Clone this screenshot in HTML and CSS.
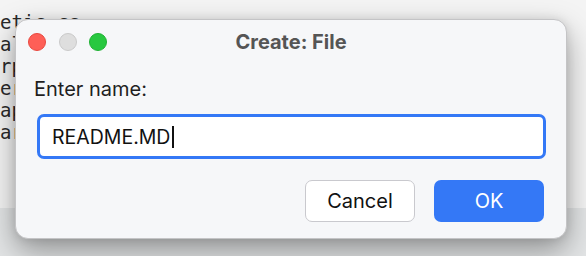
FILE: index.html
```html
<!DOCTYPE html>
<html lang="en">
<head>
    <meta charset="UTF-8">
    <meta name="viewport" content="width=device-width, initial-scale=1.0">
    <title>Create: File</title>
    <link rel="stylesheet" href="styles.css">
</head>
<body>
    <div class="editor">
        <div class="code">
            <span class="line">etic.cs</span>
            <span class="line">al</span>
            <span class="line">rp</span>
            <span class="line">er</span>
            <span class="line">ap</span>
            <span class="line">ar</span>
        </div>
        <div class="status-band"></div>
    </div>

    <div class="dialog">
        <div class="titlebar">
            <div class="lights">
                <span class="light close"></span>
                <span class="light mini"></span>
                <span class="light zoom"></span>
            </div>
            <div class="title">Create: File</div>
            <div></div>
        </div>
        <div class="content">
            <div class="label">Enter name:</div>
            <div class="field">
                <span class="value">README.MD</span><span class="caret"></span>
            </div>
            <div class="actions">
                <button class="btn cancel">Cancel</button>
                <button class="btn ok">OK</button>
            </div>
        </div>
    </div>
</body>
</html>
```

FILE: styles.css
```css
* {
    margin: 0;
    padding: 0;
    box-sizing: border-box;
}

body {
    width: 586px;
    height: 256px;
    overflow: hidden;
    position: relative;
    background: #f4f4f4;
    font-family: Inter, "Noto Sans", sans-serif;
}

.editor {
    display: flex;
    flex-direction: column;
    height: 100%;
}

.code {
    flex: 1;
    display: flex;
    flex-direction: column;
    align-items: flex-start;
    padding-top: 11px;
    font-family: "DejaVu Sans Mono", "Liberation Mono", monospace;
    font-size: 19px;
    line-height: 22px;
    color: #2a2a2a;
}

.status-band {
    height: 48px;
    background: #e3e5e6;
}

/* modal sheet, sits over the editor */
.dialog {
    position: absolute;
    left: 15px;
    top: 19px;
    width: 552px;
    height: 220px;
    background: #f6f7f9;
    border: 1px solid #c4c4c6;
    border-radius: 13px;
    box-shadow: 0 12px 30px rgba(0,0,0,0.36), 0 0 10px rgba(0,0,0,0.1);
}

.titlebar {
    height: 43px;
    display: grid;
    grid-template-columns: 1fr auto 1fr;
    align-items: center;
    padding: 0 12px;
}

.lights {
    display: flex;
    gap: 12.5px;
}

.light {
    width: 18px;
    height: 18px;
    border-radius: 50%;
}

.close {
    background: #fe5f57;
    border: 1px solid #e9483f;
}

.mini {
    background: #dedede;
    border: 1px solid #cacaca;
}

.zoom {
    background: #28c840;
    border: 1px solid #1fb133;
}

.title {
    font-size: 20px;
    font-weight: 700;
    color: #555555;
}

.content {
    padding: 0 20px 16px 21px;
}

.label {
    margin-top: 15px;
    margin-left: -3px;
    font-size: 20px;
    line-height: 23px;
    color: #1f1f1f;
}

.field {
    margin-top: 13px;
    height: 45px;
    background: #ffffff;
    border: 3px solid #3478f6;
    border-radius: 7px;
    display: flex;
    align-items: center;
    padding-left: 12px;
    font-size: 19.5px;
    color: #111111;
}

.caret {
    width: 1.5px;
    height: 22px;
    margin-left: 2px;
    background: #111111;
}

.actions {
    margin-top: 21px;
    display: flex;
    justify-content: flex-end;
    gap: 19px;
    padding-right: 2px;
}

.btn {
    width: 110px;
    height: 42px;
    border-radius: 7px;
    font-family: inherit;
    font-size: 20px;
}

.cancel {
    background: #ffffff;
    border: 1.5px solid #c9c9ce;
    color: #111111;
}

.ok {
    background: #3478f6;
    border: none;
    color: #ffffff;
}
```
